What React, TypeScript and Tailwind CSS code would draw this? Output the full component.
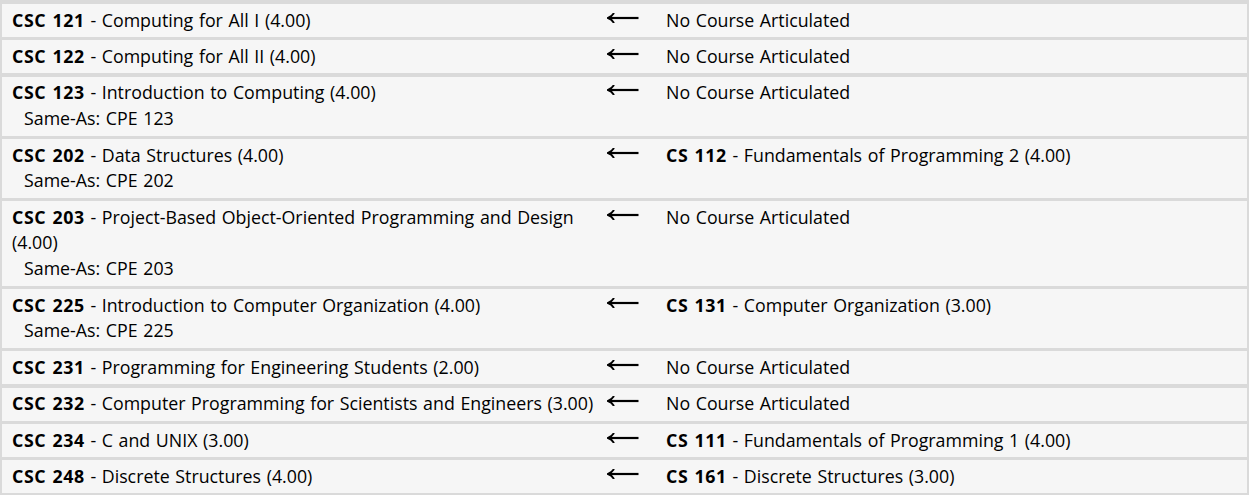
import React from 'react'

type Course = { code: string; title: string }

type Row = {
  left: Course
  sameAs?: string
  right?: Course
}

const rows: Row[] = [
  { left: { code: 'CSC 121', title: 'Computing for All I (4.00)' } },
  { left: { code: 'CSC 122', title: 'Computing for All II (4.00)' } },
  { left: { code: 'CSC 123', title: 'Introduction to Computing (4.00)' }, sameAs: 'CPE 123' },
  {
    left: { code: 'CSC 202', title: 'Data Structures (4.00)' },
    sameAs: 'CPE 202',
    right: { code: 'CS 112', title: 'Fundamentals of Programming 2 (4.00)' },
  },
  {
    left: { code: 'CSC 203', title: 'Project-Based Object-Oriented Programming and Design (4.00)' },
    sameAs: 'CPE 203',
  },
  {
    left: { code: 'CSC 225', title: 'Introduction to Computer Organization (4.00)' },
    sameAs: 'CPE 225',
    right: { code: 'CS 131', title: 'Computer Organization (3.00)' },
  },
  { left: { code: 'CSC 231', title: 'Programming for Engineering Students (2.00)' } },
  { left: { code: 'CSC 232', title: 'Computer Programming for Scientists and Engineers (3.00)' } },
  {
    left: { code: 'CSC 234', title: 'C and UNIX (3.00)' },
    right: { code: 'CS 111', title: 'Fundamentals of Programming 1 (4.00)' },
  },
  {
    left: { code: 'CSC 248', title: 'Discrete Structures (4.00)' },
    right: { code: 'CS 161', title: 'Discrete Structures (3.00)' },
  },
]

function LeftArrow() {
  return (
    <svg width="33" height="10" viewBox="0 0 33 10" className="block mt-[5px] ml-[5px]" fill="none">
      <path d="M1.6 5 H31.5" stroke="#000" strokeWidth="2.2" />
      <path d="M6.6 0.6 Q4.6 3.9 1 5 Q4.6 6.1 6.6 9.4" stroke="#000" strokeWidth="1.9" strokeLinecap="round" />
    </svg>
  )
}

function CourseText({ course }: { course: Course }) {
  return (
    <span>
      <span className="font-bold tracking-[0.6px]">{course.code}</span> - {course.title}
    </span>
  )
}

export default function App() {
  return (
    <div
      className="w-[1249px] h-[495px] overflow-hidden bg-[#dadada] pt-[4px] pb-[2px] px-[2px] flex flex-col gap-[3.4px] text-[17.8px] leading-[25.8px] text-black [word-spacing:1px]"
      style={{ fontFamily: '"Open Sans", "Noto Sans", sans-serif' }}
    >
      {rows.map((row) => (
        <div key={row.left.code} className="bg-[#f6f6f6] grid grid-cols-[600px_64px_1fr] py-[3.6px] shrink-0">
          <div className="pl-[10px] pr-[6px]">
            <div>
              <CourseText course={row.left} />
            </div>
            {row.sameAs && <div className="pl-[12px]">Same-As: {row.sameAs}</div>}
          </div>
          <div>
            <LeftArrow />
          </div>
          <div>{row.right ? <CourseText course={row.right} /> : 'No Course Articulated'}</div>
        </div>
      ))}
    </div>
  )
}
